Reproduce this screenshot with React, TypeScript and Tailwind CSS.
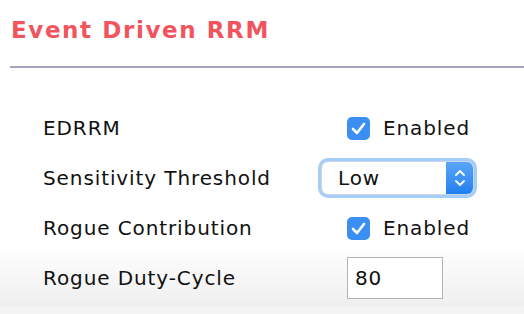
import React from "react";

function Check() {
  return (
    <span className="flex h-[23px] w-[23px] items-center justify-center rounded-[5px] bg-[#3b8ff2]">
      <svg width="15" height="13" viewBox="0 0 15 13" fill="none">
        <path d="M2 7 L6 11 L13 2" stroke="white" strokeWidth="2.6" strokeLinecap="round" strokeLinejoin="round" />
      </svg>
    </span>
  );
}

export default function App() {
  const font = { fontFamily: '"DejaVu Sans", Verdana, sans-serif' };
  return (
    <div className="relative h-[314px] w-[524px] overflow-hidden bg-white" style={font}>
      <div className="absolute inset-x-0 bottom-[8px] h-[62px] bg-gradient-to-b from-white to-[#efefef]" />
      <div className="absolute inset-x-0 bottom-0 h-[8px] bg-[#f4f4f4]" />
      <div className="relative flex flex-col">
        <div className="pl-[11px] pt-[15px] text-[23px] font-bold leading-[30px] tracking-[1.6px] text-[#f2545e]">Event Driven RRM</div>
        <div className="ml-[10px] mt-[21px] h-[2px] bg-[#a4a4c0]" />
        <div className="mt-[35px] flex flex-col pl-[43px] text-[20px] tracking-[0.9px] text-[#111]">
          <div className="flex h-[50px] items-center">
            <div className="w-[304px]">EDRRM</div>
            <Check />
            <span className="ml-[13px]">Enabled</span>
          </div>
          <div className="flex h-[50px] items-center">
            <div className="w-[275px]">Sensitivity Threshold</div>
            <div className="rounded-[10px] bg-[#a6cdf8] p-[4px]">
              <div className="flex h-[32px] w-[151px] items-stretch overflow-hidden rounded-[6px] bg-white shadow-[0_0_0_1px_#c8d6e8]">
                <div className="flex flex-1 items-center pl-[16px]">Low</div>
                <div className="flex w-[27px] items-center justify-center bg-gradient-to-b from-[#5aa5f8] to-[#1f7ff0]">
                  <svg width="12" height="20" viewBox="0 0 12 20" fill="none">
                    <path d="M2 7 L6 3 L10 7 M2 13 L6 17 L10 13" stroke="white" strokeWidth="1.8" strokeLinecap="round" strokeLinejoin="round" />
                  </svg>
                </div>
              </div>
            </div>
          </div>
          <div className="flex h-[50px] items-center">
            <div className="w-[304px]">Rogue Contribution</div>
            <Check />
            <span className="ml-[13px]">Enabled</span>
          </div>
          <div className="flex h-[50px] items-center">
            <div className="w-[304px]">Rogue Duty-Cycle</div>
            <div className="flex h-[42px] w-[96px] items-center border border-[#b4b4b4] bg-white pl-[7px]">80</div>
          </div>
        </div>
      </div>
    </div>
  );
}
